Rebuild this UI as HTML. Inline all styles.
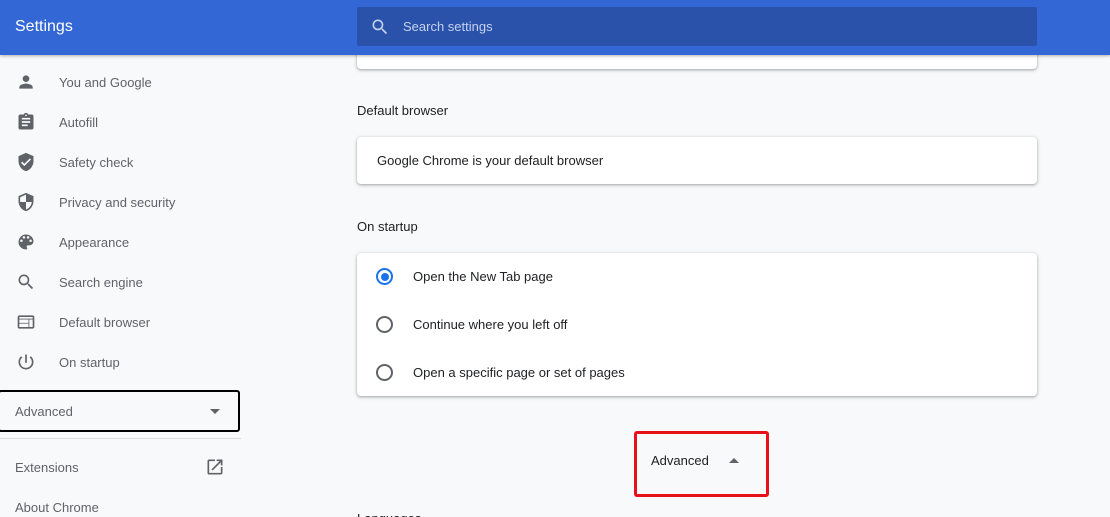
<!DOCTYPE html>
<html style="width:1110px;height:517px;overflow:hidden"><head><meta charset="utf-8"><style>
*{margin:0;padding:0;box-sizing:border-box}
html,body{overflow:hidden}
body{width:1110px;height:517px;overflow:hidden;background:#f8f9fa;font-family:"Liberation Sans",Arial,sans-serif;color:#202124;position:relative}
.hdr{position:absolute;left:0;top:0;width:1110px;height:55px;background:#3367d6;box-shadow:0 1px 3px rgba(0,0,0,.3);z-index:2}
.hdr .t{position:absolute;left:15px;top:18px;color:#fff;font-size:16px}
.srch{position:absolute;left:357px;top:7px;width:680px;height:39px;background:#2a52ab;border-radius:2px}
.srch span{position:absolute;left:46px;top:12px;color:#c5d2ee;font-size:13px}
.srch svg{position:absolute;left:13px;top:10px}
.it{position:absolute;left:0;height:40px;width:240px}
.it svg{position:absolute;left:16px;top:10px}
.it span{position:absolute;left:59px;top:13px;font-size:13px;color:#5f6368;white-space:nowrap}
.adv{position:absolute;left:-2px;top:390px;width:242px;height:42px;border:2px solid #000;border-radius:3px}
.adv span{position:absolute;left:15px;top:12px;font-size:13px;color:#5f6368}
.tri{position:absolute;width:0;height:0;border-left:5px solid transparent;border-right:5px solid transparent}
.sep{position:absolute;left:0;top:438px;width:241px;height:1px;background:#dadce0}
.card{position:absolute;left:357px;width:680px;background:#fff;border-radius:4px;box-shadow:0 1px 2px rgba(60,64,67,.3),0 1px 3px 1px rgba(60,64,67,.15)}
.h{position:absolute;left:357px;font-size:13px;color:#202124}
.txt{position:absolute;font-size:13px;color:#202124;white-space:nowrap}
.rad{position:absolute;left:376px;width:17px;height:17px;border:2px solid #5f6368;border-radius:50%}
</style></head><body>
<div class="hdr"><div class="t">Settings</div>
<div class="srch"><svg width="20" height="20" viewBox="0 0 24 24"><path fill="#c5d2ee" d="M15.5 14h-.79l-.28-.27A6.47 6.47 0 0016 9.5 6.5 6.5 0 109.5 16c1.61 0 3.090-.59 4.23-1.57l.27.28v.79l5 4.99L20.49 19l-4.99-5zm-6 0C7.010 14 5 11.99 5 9.5S7.01 5 9.5 5 14 7.01 14 9.5 11.99 14 9.5 14z"/></svg><span>Search settings</span></div></div>

<div class="card" style="top:30px;height:39px"></div>
<div class="h" style="top:103px">Default browser</div>
<div class="card" style="top:137px;height:47px"></div>
<div class="txt" style="left:377px;top:153px">Google Chrome is your default browser</div>
<div class="h" style="top:219px">On startup</div>
<div class="card" style="top:253px;height:143px"></div>
<div class="rad" style="top:268px;border-color:#1a73e8"><div style="position:absolute;left:2.5px;top:2.5px;width:8px;height:8px;border-radius:50%;background:#1a73e8"></div></div>
<div class="txt" style="left:413px;top:269px">Open the New Tab page</div>
<div class="rad" style="top:316px"></div>
<div class="txt" style="left:413px;top:317px">Continue where you left off</div>
<div class="rad" style="top:364px"></div>
<div class="txt" style="left:413px;top:365px">Open a specific page or set of pages</div>
<div style="position:absolute;left:634px;top:431px;width:135px;height:66px;border:3px solid #e8101a;border-radius:3px"></div>
<div class="txt" style="left:651px;top:453px;color:#202124">Advanced</div>
<div class="tri" style="left:729px;top:458px;border-bottom:5px solid #5f6368"></div>
<div class="txt" style="left:357px;top:511px">Languages</div>

<div class="it" style="top:62px"><svg width="20" height="20" viewBox="0 0 24 24"><path fill="#5f6368" d="M12 12c2.21 0 4-1.79 4-4s-1.79-4-4-4-4 1.79-4 4 1.79 4 4 4zm0 2c-2.670 0-8 1.34-8 4v2h16v-2c0-2.66-5.33-4-8-4z"/></svg><span>You and Google</span></div>
<div class="it" style="top:102px"><svg width="20" height="20" viewBox="0 0 24 24"><path fill="#5f6368" d="M19 3h-4.18C14.4 1.84 13.3 1 12 1s-2.4.84-2.82 2H5c-1.1 0-2 .9-2 2v14c0 1.1.9 2 2 2h14c1.1 0 2-.9 2-2V5c0-1.1-.9-2-2-2zm-7 0c.55 0 1 .45 1 1s-.45 1-1 1-1-.45-1-1 .45-1 1-1zm2 14H7v-2h7v2zm3-4H7v-2h10v2zm0-4H7V7h10v2z"/></svg><span>Autofill</span></div>
<div class="it" style="top:142px"><svg width="20" height="20" viewBox="0 0 24 24"><path fill="#5f6368" d="M12 1L3 5v6c0 5.55 3.84 10.74 9 12 5.160-1.26 9-6.45 9-12V5l-9-4zm-2 16l-4-4 1.41-1.41L10 14.17l6.59-6.59L18 9l-8 8z"/></svg><span>Safety check</span></div>
<div class="it" style="top:182px"><svg width="20" height="20" viewBox="0 0 24 24"><path fill="#5f6368" d="M12 1L3 5v6c0 5.55 3.84 10.74 9 12 5.16-1.26 9-6.45 9-12V5l-9-4zm0 10.99h7c-.53 4.12-3.28 7.79-7 8.94V12H5V6.3l7-3.11v8.8z"/></svg><span>Privacy and security</span></div>
<div class="it" style="top:222px"><svg width="20" height="20" viewBox="0 0 24 24"><path fill="#5f6368" d="M12 3a9 9 0 000 18c.83 0 1.5-.67 1.5-1.5 0-.39-.15-.74-.39-1.01-.23-.26-.38-.61-.38-.99 0-.83.67-1.5 1.5-1.5H16c2.76 0 5-2.24 5-5 0-4.42-4.03-8-9-8zm-5.5 9a1.5 1.5 0 110-3 1.5 1.5 0 010 3zm3-4a1.5 1.5 0 110-3 1.5 1.5 0 010 3zm5 0a1.5 1.5 0 110-3 1.5 1.5 0 010 3zm3 4a1.5 1.5 0 110-3 1.5 1.5 0 010 3z"/></svg><span>Appearance</span></div>
<div class="it" style="top:262px"><svg width="20" height="20" viewBox="0 0 24 24"><path fill="#5f6368" d="M15.5 14h-.79l-.28-.27A6.47 6.47 0 0016 9.5 6.5 6.5 0 109.5 16c1.61 0 3.09-.59 4.23-1.57l.27.28v.79l5 4.99L20.49 19l-4.99-5zm-6 0C7.01 14 5 11.99 5 9.5S7.01 5 9.5 5 14 7.01 14 9.5 11.99 14 9.5 14z"/></svg><span>Search engine</span></div>
<div class="it" style="top:302px"><svg width="20" height="20" viewBox="0 0 24 24"><path fill="#5f6368" d="M20 4H4c-1.1 0-2 .9-2 2v12c0 1.1.9 2 2 2h16c1.1 0 2-.9 2-2V6c0-1.1-.9-2-2-2zm-5 14H4v-4h11v4zm0-5H4V9h11v4zm5 5h-4V9h4v9zM4 8V6h16v2H4z"/></svg><span>Default browser</span></div>
<div class="it" style="top:342px"><svg width="20" height="20" viewBox="0 0 24 24"><path fill="#5f6368" d="M13 3h-2v10h2V3zm4.83 2.17l-1.42 1.42A6.92 6.92 0 0119 12c0 3.87-3.13 7-7 7A6.995 6.995 0 017.58 6.58L6.17 5.17A8.932 8.932 0 003 12a9 9 0 0018 0c0-2.74-1.23-5.18-3.17-6.83z"/></svg><span>On startup</span></div>
<div class="adv"><span>Advanced</span><div class="tri" style="left:210px;top:17px;border-top:5px solid #5f6368"></div></div>
<div class="sep"></div>
<div class="it" style="top:447px"><span style="left:15px">Extensions</span><svg style="left:205px" width="20" height="20" viewBox="0 0 24 24"><path fill="#5f6368" d="M19 19H5V5h7V3H5a2 2 0 00-2 2v14a2 2 0 002 2h14c1.1 0 2-.9 2-2v-7h-2v7zM14 3v2h3.59l-9.83 9.83 1.41 1.41L19 6.41V10h2V3h-7z"/></svg></div>
<div class="it" style="top:487px"><span style="left:15px">About Chrome</span></div>
</body></html>
